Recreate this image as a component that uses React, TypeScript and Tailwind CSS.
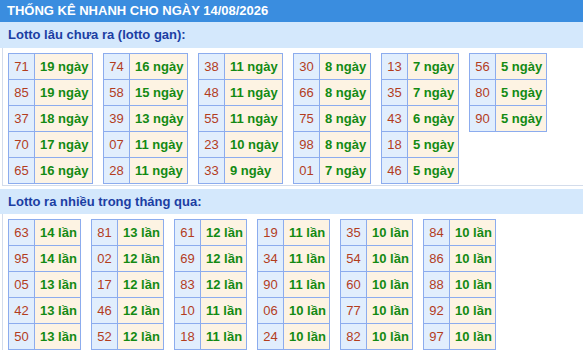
import React from 'react';

type Row = [string, string];

const ganTables: Row[][] = [
  [['71', '19 ngày'], ['85', '19 ngày'], ['37', '18 ngày'], ['70', '17 ngày'], ['65', '16 ngày']],
  [['74', '16 ngày'], ['58', '15 ngày'], ['39', '13 ngày'], ['07', '11 ngày'], ['28', '11 ngày']],
  [['38', '11 ngày'], ['48', '11 ngày'], ['55', '11 ngày'], ['23', '10 ngày'], ['33', '9 ngày']],
  [['30', '8 ngày'], ['66', '8 ngày'], ['75', '8 ngày'], ['98', '8 ngày'], ['01', '7 ngày']],
  [['13', '7 ngày'], ['35', '7 ngày'], ['43', '6 ngày'], ['18', '5 ngày'], ['46', '5 ngày']],
  [['56', '5 ngày'], ['80', '5 ngày'], ['90', '5 ngày']],
];

const hotTables: Row[][] = [
  [['63', '14 lần'], ['95', '14 lần'], ['05', '13 lần'], ['42', '13 lần'], ['50', '13 lần']],
  [['81', '13 lần'], ['02', '12 lần'], ['17', '12 lần'], ['46', '12 lần'], ['52', '12 lần']],
  [['61', '12 lần'], ['69', '12 lần'], ['83', '12 lần'], ['10', '11 lần'], ['18', '11 lần']],
  [['19', '11 lần'], ['34', '11 lần'], ['90', '11 lần'], ['06', '10 lần'], ['24', '10 lần']],
  [['35', '10 lần'], ['54', '10 lần'], ['60', '10 lần'], ['77', '10 lần'], ['82', '10 lần']],
  [['84', '10 lần'], ['86', '10 lần'], ['88', '10 lần'], ['92', '10 lần'], ['97', '10 lần']],
];

// value column width depends on the longest label in the table
const valWidth = (rows: Row[]) => {
  if (rows[0][1].includes('lần')) return 'w-[46px]';
  return rows.some(([, v]) => v.split(' ')[0].length > 1) ? 'w-[58px]' : 'w-[51px]';
};

const StatTable: React.FC<{ rows: Row[] }> = ({ rows }) => {
  const vw = valWidth(rows);
  return (
    <div className="flex flex-col border-l border-t border-[#8cacee] text-[13px] leading-none">
      {rows.map(([num, val]) => (
        <div key={num} className="flex h-[26px]">
          <div className="flex w-[26px] items-center justify-center border-r border-b border-[#8cacee] bg-[#e1eefd] text-[#b33d1d]">
            {num}
          </div>
          <div className={`flex ${vw} items-center border-r border-b border-[#8cacee] bg-[#fdf3e3] pl-[5px] font-bold text-[#138a13]`}>
            {val}
          </div>
        </div>
      ))}
    </div>
  );
};

const Section: React.FC<{ title: string; tables: Row[][]; first?: boolean }> = ({ title, tables, first }) => (
  <div>
    <div className={`flex ${first ? 'h-[26px]' : 'h-[25px]'} items-center bg-[#d4e8fc] pl-[8px] text-[13px] font-bold text-[#1b3ea3]`}>
      {title}
    </div>
    <div className={`ml-[2px] border-l border-[#d3dceb] pl-[5px] pt-[5px] ${first ? 'mb-[3px] border-b pb-[1px]' : ''}`}>
      <div className="flex items-start gap-[10px]">
        {tables.map((t, i) => (
          <StatTable key={i} rows={t} />
        ))}
      </div>
    </div>
  </div>
);

export default function App() {
  return (
    <div className="h-[351px] w-[583px] overflow-hidden bg-white" style={{ fontFamily: '"Liberation Sans", Arial, sans-serif' }}>
      <div className="flex h-[22px] items-center bg-[#3a8ddf] pl-[7px] text-[13px] font-bold text-white">
        THỐNG KÊ NHANH CHO NGÀY 14/08/2026
      </div>
      <Section title="Lotto lâu chưa ra (lotto gan):" tables={ganTables} first />
      <Section title="Lotto ra nhiều trong tháng qua:" tables={hotTables} />
    </div>
  );
}
